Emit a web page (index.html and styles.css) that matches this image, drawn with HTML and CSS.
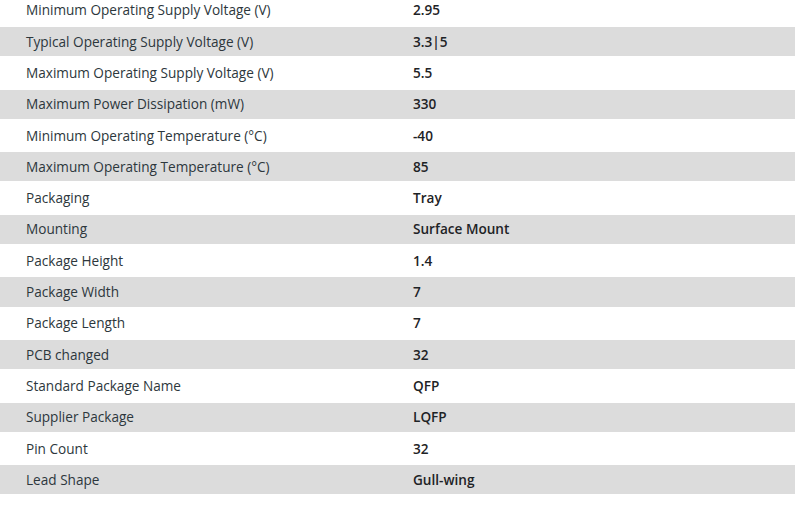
FILE: index.html
```html
<!DOCTYPE html>
<html>
<head>
<meta charset="utf-8">
<link rel="stylesheet" href="styles.css">
</head>
<body>
<table class="specs">
<tbody>
<tr><td class="label">Minimum Operating Supply Voltage (V)</td><td class="value">2.95</td></tr>
<tr><td class="label">Typical Operating Supply Voltage (V)</td><td class="value">3.3|5</td></tr>
<tr><td class="label">Maximum Operating Supply Voltage (V)</td><td class="value">5.5</td></tr>
<tr><td class="label">Maximum Power Dissipation (mW)</td><td class="value">330</td></tr>
<tr><td class="label">Minimum Operating Temperature (°C)</td><td class="value">-40</td></tr>
<tr><td class="label">Maximum Operating Temperature (°C)</td><td class="value">85</td></tr>
<tr><td class="label">Packaging</td><td class="value">Tray</td></tr>
<tr><td class="label">Mounting</td><td class="value">Surface Mount</td></tr>
<tr><td class="label">Package Height</td><td class="value">1.4</td></tr>
<tr><td class="label">Package Width</td><td class="value">7</td></tr>
<tr><td class="label">Package Length</td><td class="value">7</td></tr>
<tr><td class="label">PCB changed</td><td class="value">32</td></tr>
<tr><td class="label">Standard Package Name</td><td class="value">QFP</td></tr>
<tr><td class="label">Supplier Package</td><td class="value">LQFP</td></tr>
<tr><td class="label">Pin Count</td><td class="value">32</td></tr>
<tr><td class="label">Lead Shape</td><td class="value">Gull-wing</td></tr>
</tbody>
</table>
</body>
</html>
```
FILE: styles.css
```css
html, body {
  margin: 0;
  padding: 0;
  background: #ffffff;
}
body {
  font-family: "Open Sans", "Noto Sans", sans-serif;
  font-size: 13.6px;
  color: #2d373c;
  overflow: hidden;
}
.specs {
  width: 100%;
  border-collapse: separate;
  border-spacing: 0 2px;
  margin-top: -6.3px;
}
.specs td {
  height: 29.3px;
  padding: 0;
  vertical-align: middle;
  line-height: 18px;
}
.specs tr:nth-child(even) td {
  background: #dcdcdc;
}
.label {
  width: 387px;
  padding-left: 26px !important;
}
.value {
  font-weight: 600;
  color: #1e2326;
}
```
